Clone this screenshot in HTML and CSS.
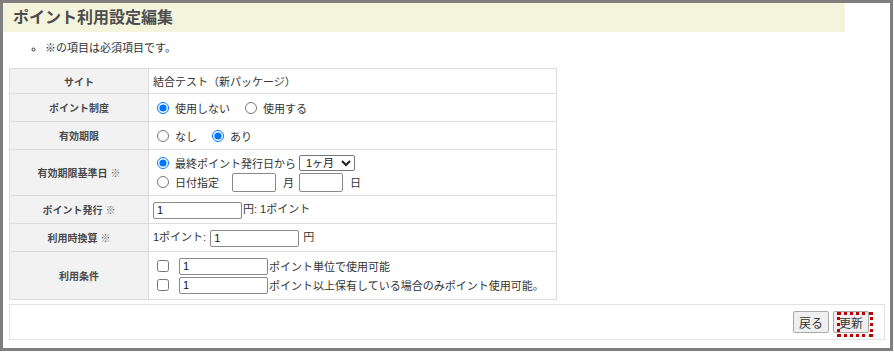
FILE: index.html
```html
<!DOCTYPE html>
<html lang="ja">
<head>
    <meta charset="UTF-8">
    <title>ポイント利用設定編集</title>
    <link rel="stylesheet" href="styles.css">
</head>
<body>
    <div class="frame">
        <h1 class="page-title">ポイント利用設定編集</h1>

        <ul class="notes">
            <li>※の項目は必須項目です。</li>
        </ul>

        <table class="form-table">
            <tr class="row-site">
                <th>サイト</th>
                <td>結合テスト（新パッケージ）</td>
            </tr>
            <tr class="row-std">
                <th>ポイント制度</th>
                <td>
                    <label class="opt"><input type="radio" name="system" checked>使用しない</label>
                    <label class="opt"><input type="radio" name="system">使用する</label>
                </td>
            </tr>
            <tr class="row-std">
                <th>有効期限</th>
                <td>
                    <label class="opt"><input type="radio" name="expire">なし</label>
                    <label class="opt"><input type="radio" name="expire" checked>あり</label>
                </td>
            </tr>
            <tr class="row-base">
                <th>有効期限基準日 <span class="req">※</span></th>
                <td>
                    <div class="line">
                        <label class="opt"><input type="radio" name="base" checked>最終ポイント発行日から</label>
                        <select class="sel">
                            <option>1ヶ月</option>
                        </select>
                    </div>
                    <div class="line">
                        <label class="opt opt-date"><input type="radio" name="base">日付指定</label>
                        <input type="text" class="txt txt-date"><span class="unit">月</span>
                        <input type="text" class="txt txt-date"><span class="unit">日</span>
                    </div>
                </td>
            </tr>
            <tr class="row-std">
                <th>ポイント発行 <span class="req">※</span></th>
                <td><input type="text" class="txt" value="1">円: 1ポイント</td>
            </tr>
            <tr class="row-std">
                <th>利用時換算 <span class="req">※</span></th>
                <td>1ポイント:<input type="text" class="txt txt-rate" value="1">円</td>
            </tr>
            <tr class="row-cond">
                <th>利用条件</th>
                <td>
                    <div class="line">
                        <input type="checkbox" class="chk"><input type="text" class="txt" value="1">ポイント単位で使用可能
                    </div>
                    <div class="line">
                        <input type="checkbox" class="chk"><input type="text" class="txt" value="1">ポイント以上保有している場合のみポイント使用可能。
                    </div>
                </td>
            </tr>
        </table>

        <div class="actions">
            <button class="btn">戻る</button>
            <button class="btn btn-marked">更新</button>
        </div>
    </div>
</body>
</html>
```

FILE: styles.css
```css
body {
    margin: 0;
    background: #ffffff;
    font-family: "Liberation Sans", "Noto Sans CJK JP", sans-serif;
    color: #333333;
}

.frame {
    width: 887px;
    height: 345px;
    border: 3px solid #7f7f7f;
}

.page-title {
    width: 832px;
    height: 29px;
    margin: 0;
    padding-left: 10px;
    background: #f4f4dc;
    color: #4d4d4d;
    font-size: 16px;
    font-weight: bold;
    line-height: 29px;
}

.notes {
    margin: 8px 0 12px;
    padding-left: 42px;
    list-style-type: circle;
    font-size: 11px;
    line-height: 16px;
}

/* フォームテーブル */
.form-table {
    margin-left: 6px;
    width: 548px;
    border-collapse: collapse;
    font-size: 11px;
}

.form-table th,
.form-table td {
    border: 1px solid #dcdcdc;
    padding: 0 4px;
}

.form-table th {
    width: 130px;
    background: #f2f2f2;
    color: #4a4a4a;
    font-size: 10px;
    font-weight: bold;
    text-align: center;
}

.form-table td {
    text-align: left;
}

.req {
    font-weight: normal;
    color: #666666;
}

.row-site { height: 25px; }
.row-std { height: 28px; }
.row-base { height: 46px; }
.row-cond { height: 48px; }

.line {
    display: flex;
    align-items: center;
    height: 19px;
}

.opt {
    display: inline-flex;
    align-items: center;
    margin-right: 8px;
}

.opt input {
    width: 12px;
    height: 12px;
    margin: 0 6px 0 4px;
}

.opt-date {
    margin-right: 13px;
}

.sel {
    width: 56px;
    height: 16px;
    margin-left: -5px;
    padding: 0 0 0 2px;
    border: 1px solid #767676;
    border-radius: 2px;
    font-family: "Liberation Sans", "Noto Sans CJK JP", sans-serif;
    font-size: 11px;
    color: #222222;
    background: #ffffff;
}

.txt {
    box-sizing: border-box;
    width: 89px;
    height: 17px;
    margin: 0 1px 0 0;
    padding: 0 3px;
    border: 1px solid #8a8a8a;
    border-radius: 2px;
    font-family: "Liberation Sans", sans-serif;
    font-size: 11px;
    color: #111111;
    vertical-align: middle;
}

.txt-rate {
    margin: 0 4px 0 4px;
}

.txt-date {
    width: 44px;
    height: 19px;
}

.unit {
    margin: 0 5px 0 6px;
}

.chk {
    width: 12px;
    height: 12px;
    margin: 0 10px 0 4px;
}

/* ボタン */
.actions {
    box-sizing: border-box;
    display: flex;
    justify-content: flex-end;
    align-items: flex-start;
    gap: 4px;
    width: 876px;
    height: 36px;
    margin: 4px 0 0 6px;
    padding: 6px 15px 0 0;
    border: 1px solid #e2e2e2;
}

.btn {
    position: relative;
    width: 36px;
    height: 22px;
    padding: 0;
    border: 1px solid #a9a9a9;
    border-radius: 2px;
    background: #efefef;
    color: #333333;
    font-family: "Noto Sans CJK JP", sans-serif;
    font-size: 12px;
}

.btn-marked::after {
    content: "";
    position: absolute;
    left: 3px;
    top: 0;
    width: 36px;
    height: 25px;
    box-sizing: border-box;
    border: 3px dotted #c00000;
}
```
